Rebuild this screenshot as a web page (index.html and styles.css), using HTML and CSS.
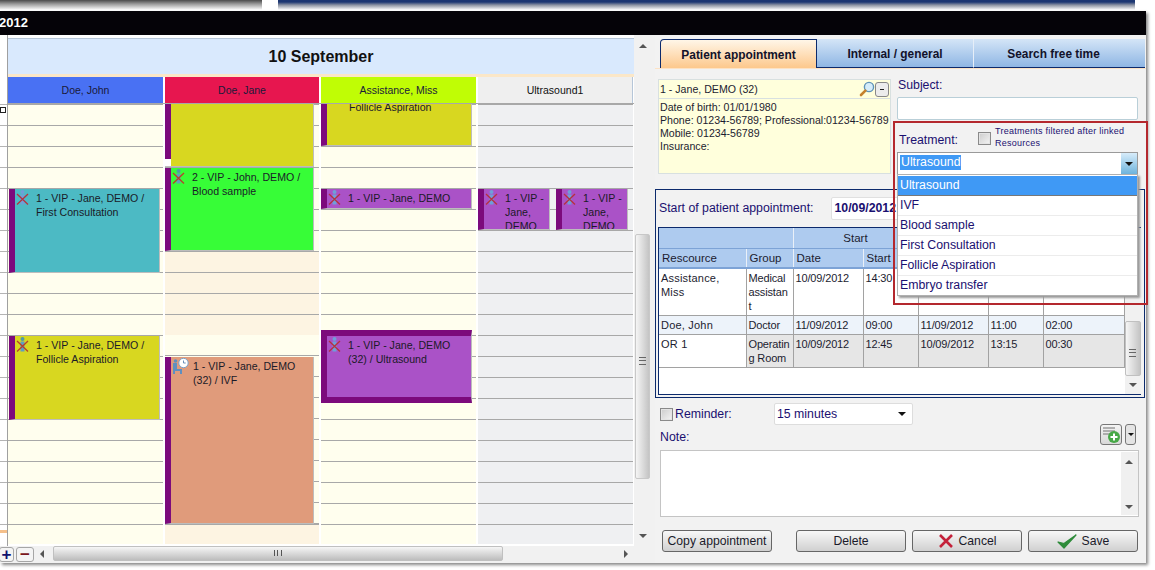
FILE: index.html
```html
<!DOCTYPE html>
<html>
	<head>
		<title>Appointment 2012</title>
		<link rel="stylesheet" href="styles.css">
	</head>
	<body>
		<div class="topstrip"><div class="strip-gray"></div><div class="strip-blue"></div></div>
		<div class="window">
			<div class="titlebar">2012</div>
			<div class="main">
				<div class="left">
					<div class="left-top">
						<div class="gutter">
							<div class="gutter-ticks"></div>
							<div class="gutter-box"></div>
							<div class="gutter-mark"></div>
						</div>
						<div class="calendar">
							<div class="day">10 September</div>
							<div class="heads">
								<div class="head head-john">Doe, John</div>
								<div class="head head-jane">Doe, Jane</div>
								<div class="head head-miss">Assistance, Miss</div>
								<div class="head head-us">Ultrasound1</div>
							</div>
							<div class="grid">
								<div class="col col-john">
									<div class="ev ev-teal" style="top:85px;height:84px"><svg class="ico"><use href="#absent"/></svg><p>1 - VIP - Jane, DEMO /<br>First Consultation</p></div>
									<div class="ev ev-olive" style="top:232px;height:84px"><svg class="ico"><use href="#absent2"/></svg><p>1 - VIP - Jane, DEMO /<br>Follicle Aspiration</p></div>
								</div>
								<div class="col col-jane">
									<div class="ev ev-olive ev-short" style="top:-26px;height:89px"></div>
									<div class="ev ev-green" style="top:64px;height:83px"><svg class="ico"><use href="#absent2"/></svg><p>2 - VIP - John, DEMO /<br>Blood sample</p></div>
									<div class="ev ev-salmon" style="top:253px;height:167px"><svg class="ico ico-wait"><use href="#waiting"/></svg><p>1 - VIP - Jane, DEMO<br>(32) / IVF</p></div>
								</div>
								<div class="col col-miss">
									<div class="ev ev-olive ev-clip" style="top:-21px;height:63px"><p>Follicle Aspiration</p></div>
									<div class="ev ev-purple" style="top:85px;height:20px"><svg class="ico"><use href="#absent"/></svg><p>1 - VIP - Jane, DEMO</p></div>
									<div class="ev ev-purple ev-band" style="top:226px;height:73px"><svg class="ico"><use href="#absent"/></svg><p>1 - VIP - Jane, DEMO<br>(32) / Ultrasound</p></div>
								</div>
								<div class="col col-us">
									<div class="ev ev-purple ev-half" style="top:85px;height:41px"><svg class="ico"><use href="#absent"/></svg><p>1 - VIP -<br>Jane,<br>DEMO</p></div>
									<div class="ev ev-purple ev-half ev-half2" style="top:85px;height:41px"><svg class="ico"><use href="#absent"/></svg><p>1 - VIP -<br>Jane,<br>DEMO</p></div>
								</div>
							</div>
						</div>
						<div class="vscroll">
							<span class="arrow-up"></span>
							<div class="vthumb"><span class="grip"></span></div>
							<span class="arrow-down"></span>
						</div>
					</div>
					<div class="hbar">
						<button class="zoom-btn zoom-plus">+</button>
						<button class="zoom-btn zoom-minus">&minus;</button>
						<span class="arrow-left"></span>
						<div class="hthumb"><span class="hgrip"></span></div>
						<span class="arrow-right"></span>
					</div>
				</div>

				<div class="right">
					<div class="tabs">
						<div class="tab tab-on">Patient appointment</div>
						<div class="tab tab-mid">Internal / general</div>
						<div class="tab tab-last">Search free time</div>
					</div>
					<div class="tab-line"></div>

					<div class="upper">
						<div class="patient">
							<div class="patient-name">
								<span>1 - Jane, DEMO (32)</span>
								<svg class="lens" viewBox="0 0 16 16"><circle cx="10" cy="6" r="4.6" fill="#d5ecfa" stroke="#5f93b8" stroke-width="1.4"/><path d="M6.4 9.6 2 14" stroke="#c5822e" stroke-width="2.6" stroke-linecap="round"/></svg>
								<span class="collapse"></span>
							</div>
							<div class="patient-info">Date of birth: 01/01/1980<br>Phone: 01234-56789; Professional:01234-56789<br>Mobile: 01234-56789<br>Insurance:</div>
						</div>
						<div class="subject">
							<label class="lbl">Subject:</label>
							<div class="subject-input"></div>
							<div class="treat-row">
								<label class="lbl">Treatment:</label>
								<span class="check"></span>
								<span class="filter-note">Treatments filtered after linked Resources</span>
							</div>
							<div class="combo">
								<span class="combo-sel">Ultrasound</span>
								<span class="combo-btn"><i class="caret"></i></span>
							</div>
						</div>
					</div>

					<div class="start-box">
						<div class="start-row">
							<span>Start of patient appointment:</span>
							<span class="date-input">10/09/2012</span>
						</div>
						<div class="table-wrap">
							<table>
								<colgroup>
									<col class="c1"><col class="c2"><col class="c3"><col class="c4"><col class="c5"><col class="c6"><col class="c7">
								</colgroup>
								<tr class="th-top"><th colspan="2"></th><th colspan="2">Start</th><th colspan="3"></th></tr>
								<tr class="th-sub"><th>Rescource</th><th>Group</th><th>Date</th><th>Start</th><th></th><th></th><th></th></tr>
								<tr class="r-white"><td>Assistance, Miss</td><td>Medical<br>assistan<br>t</td><td>10/09/2012</td><td>14:30</td><td></td><td></td><td></td></tr>
								<tr class="r-blue"><td>Doe, John</td><td>Doctor</td><td>11/09/2012</td><td>09:00</td><td>11/09/2012</td><td>11:00</td><td>02:00</td></tr>
								<tr class="r-gray"><td>OR 1</td><td>Operatin<br>g Room</td><td>10/09/2012</td><td>12:45</td><td>10/09/2012</td><td>13:15</td><td>00:30</td></tr>
							</table>
							<div class="tscroll">
								<div class="tthumb"><span class="grip"></span></div>
								<span class="arrow-down"></span>
							</div>
						</div>
					</div>

					<div class="reminder">
						<span class="check"></span>
						<label class="lbl">Reminder:</label>
						<div class="minutes">15 minutes<i class="caret"></i></div>
					</div>
					<div class="note-row">
						<label class="lbl">Note:</label>
						<div class="note-tools">
							<span class="add-btn">
								<svg viewBox="0 0 20 19" width="20" height="19"><path d="M2 3h12M2 6h12M2 9h7" stroke="#9a9a9a" stroke-width="1.5"/><circle cx="13" cy="12" r="6" fill="#47a847"/><path d="M13 8.5v7M9.5 12h7" stroke="#fff" stroke-width="2"/></svg>
							</span>
							<span class="add-more"><i class="caret"></i></span>
						</div>
					</div>
					<div class="note">
						<div class="note-scroll"><span class="arrow-up"></span><span class="arrow-down"></span></div>
					</div>

					<div class="buttons">
						<button class="btn btn-copy">Copy appointment</button>
						<button class="btn btn-act">Delete</button>
						<button class="btn btn-act">
							<svg viewBox="0 0 16 14" width="16" height="14"><path d="M2 1 14 13M14 1 2 13" stroke="#c4213a" stroke-width="2.6"/></svg>Cancel
						</button>
						<button class="btn btn-act">
							<svg viewBox="0 0 20 15" width="20" height="15"><path d="M1 8 7 14 19 1 7 9.5Z" fill="#2e8b3a" stroke="#2e8b3a" stroke-width="1.2" stroke-linejoin="round"/></svg>Save
						</button>
					</div>

					<div class="picker">
						<div class="pick pick-on">Ultrasound</div>
						<div class="pick">IVF</div>
						<div class="pick">Blood sample</div>
						<div class="pick">First Consultation</div>
						<div class="pick">Follicle Aspiration</div>
						<div class="pick">Embryo transfer</div>
					</div>
					<div class="redbox"></div>
				</div>
			</div>
		</div>

		<svg class="defs" width="0" height="0">
			<symbol id="absent" viewBox="0 0 13 15">
				<circle cx="6.5" cy="2" r="2" fill="#6f9fd8"/>
				<path d="M4.5 4.5h4v10h-4z" fill="#6f9fd8"/>
				<path d="M1 4 12 14.5M12 4 1 14.5" stroke="#b5323e" stroke-width="1.3"/>
			</symbol>
			<symbol id="absent2" viewBox="0 0 13 15">
				<circle cx="6.5" cy="2" r="2" fill="#4f9aa8"/>
				<path d="M4.5 4.5h4v10h-4z" fill="#5f9fc0"/>
				<path d="M1 4 12 14.5M12 4 1 14.5" stroke="#b8402a" stroke-width="1.3"/>
			</symbol>
			<symbol id="waiting" viewBox="0 0 17 17">
				<circle cx="11.5" cy="5" r="4.7" fill="#fff" stroke="#7aa0c8"/>
				<path d="M11.5 2.5V5h2.2" fill="none" stroke="#6a8fb8"/>
				<circle cx="3.5" cy="3" r="1.8" fill="#5f8fc0"/>
				<path d="M1 5h4v6h5v5H8v-3H3v3H1z" fill="#5f8fc0"/>
			</symbol>
		</svg>
	</body>
</html>
```

FILE: styles.css
```css
html, body { margin: 0; padding: 0; }
body {
	width: 1155px;
	height: 570px;
	overflow: hidden;
	background: #fff;
	font-family: "Liberation Sans", Arial, sans-serif;
	font-size: 12px;
	color: #1c1c30;
}
p { margin: 0; }
label { display: block; }
button { font-family: inherit; padding: 0; }
.defs { display: block; height: 0; }

.topstrip { display: flex; height: 11px; }
.strip-gray { width: 262px; height: 10px; background: linear-gradient(#4a4a4a, #9a9a9a 40%, #fff); }
.strip-blue { width: 857px; height: 10px; margin-left: 16px; background: linear-gradient(#1c3672 20%, #8b92a2 50%, #fff); }

.window {
	width: 1146px;
	height: 552px;
	background: #f2f2f2;
	box-shadow: 2px 2px 3px #888;
}
.titlebar {
	height: 24px;
	background: #050308;
	color: #fff;
	font-size: 13px;
	font-weight: bold;
	line-height: 24px;
	text-indent: -1px;
}
.main { display: flex; position: relative; height: 528px; }

/* left side: calendar */
.left { width: 655px; background: #fff; }
.left-top { display: flex; height: 511px; }
.gutter { width: 7px; position: relative; border-right: 1px solid #a0a0a0; }
.gutter-ticks {
	position: absolute;
	left: 0;
	right: 0;
	top: 69px;
	height: 440px;
	background: linear-gradient(#fff 20px, #b4b4b4 20px) 0 1px / 100% 21px;
}
.gutter-box { position: absolute; left: 0; top: 72px; width: 4px; height: 4px; border: 1px solid #222; background: #fff; }
.gutter-mark { position: absolute; left: 0; top: 495px; width: 7px; height: 3px; background: #f5c08a; }

.calendar { width: 626px; display: flex; flex-direction: column; padding-top: 3px; }
.day {
	height: 35px;
	background: #d9e9fd;
	border-top: 1px solid #b6c6d8;
	border-bottom: 3px solid #fbe7c8;
	font-size: 16px;
	font-weight: bold;
	line-height: 35px;
	text-align: center;
	color: #111;
}
.heads { display: flex; height: 26px; border-bottom: 1px solid #a8a8a8; font-size: 10.5px; }
.head { width: 155px; margin-right: 2px; line-height: 26px; text-align: center; color: #1a1a3a; }
.head-john { background: #4971f3; }
.head-jane { background: #e7164f; width: 154px; }
.head-miss { background: #c0fd05; }
.head-us { background: #efefef; border-right: 1px solid #b6c6d8; width: 154px; margin-right: 0; color: #111; }

.grid { display: flex; height: 440px; overflow: hidden; font-size: 10.6px; }
.col {
	position: relative;
	width: 155px;
	margin-right: 2px;
	background: linear-gradient(#fffeee 20px, #a8a8a8 20px) 0 1px / 100% 21px;
	overflow: hidden;
}
.col-jane { width: 154px; background: linear-gradient(#fdf4e2 20px, #a8a8a8 20px) 0 1px / 100% 21px; }
.col-us { margin-right: 0; background: linear-gradient(#eff0f2 20px, #a8a8a8 20px) 0 1px / 100% 21px; }
.col-jane::before, .col-jane::after {
	content: "";
	position: absolute;
	left: 0;
	right: 0;
	background: linear-gradient(#fffeee 20px, #a8a8a8 20px) 0 1px / 100% 21px;
}
.col-jane::before { top: 0; height: 147px; }
.col-jane::after { top: 231px; height: 189px; background-position: 0 0; }

.ev {
	position: absolute;
	z-index: 1;
	left: 1px;
	right: 3px;
	box-sizing: border-box;
	display: flex;
	border-left: 6px solid #7c0a7c;
	border-right: 1px solid #bdbdbd;
	border-bottom: 1px solid #bdbdbd;
	overflow: hidden;
	color: #1a1a28;
}
.col-jane .ev { left: 0; right: 5px; }
.col-miss .ev { left: 0; right: 4px; }
.ev p { line-height: 14px; padding-top: 2px; white-space: nowrap; }
.ico { width: 13px; height: 15px; flex: none; margin: 1px 7px 0 1px; }
.ico-wait { width: 17px; height: 17px; margin: 1px 4px 0 1px; }
.ev-teal { background: #4cbac4; }
.ev-olive { background: #d8d720; }
.ev-green { background: #37fd37; }
.ev-salmon { background: #e09b7b; }
.ev-purple { background: #aa52c7; }
.ev-band { border-top: 6px solid #7c0a7c; border-bottom: 6px solid #7c0a7c; }
.ev-clip p { padding: 17px 0 0 22px; }
.ev-short {
	border-left: 0;
	background:
		linear-gradient(#7c0a7c, #7c0a7c) 0 0 / 6px 81px no-repeat,
		linear-gradient(#fff, #fff) 0 0 / 6px 100% no-repeat,
		#d8d720;
}
.col-us .ev-half { left: 0; right: auto; width: 72px; }
.col-us .ev-half2 { left: 78px; }

.vscroll { width: 21px; position: relative; background: #f1f1f1; }
.vthumb {
	position: absolute;
	left: 1px;
	top: 199px;
	width: 15px;
	height: 245px;
	box-sizing: border-box;
	background: linear-gradient(90deg, #f5f5f5, #c4c4c4);
	border: 1px solid #c8c8c8;
	border-radius: 2px;
}
.grip { position: absolute; left: 3px; top: 50%; width: 7px; height: 6px; border-top: 1px solid #666; border-bottom: 1px solid #666; }
.grip::after { content: ""; position: absolute; left: 0; right: 0; top: 2px; border-top: 1px solid #666; }
.arrow-up, .arrow-down, .arrow-left, .arrow-right { position: absolute; width: 0; height: 0; border-style: solid; border-color: transparent; }
.arrow-up { left: 5px; top: 9px; border-width: 0 4px 4px; border-bottom-color: #555; }
.arrow-down { left: 5px; top: 499px; border-width: 4px 4px 0; border-top-color: #555; }

.hbar { display: flex; align-items: center; position: relative; height: 17px; background: #f1f1f1; }
.zoom-btn {
	width: 15px;
	height: 15px;
	background: #f4f4f4;
	border: 1px solid #a6a6a6;
	border-radius: 3px;
	font-size: 17px;
	font-weight: bold;
	line-height: 11px;
	color: #11116e;
}
.zoom-plus { margin-left: -1px; }
.zoom-minus { margin-left: 2px; width: 18px; color: #7a1620; }
.arrow-left { left: 40px; top: 4px; border-width: 4px 4px 4px 0; border-right-color: #555; }
.arrow-right { left: 624px; top: 4px; border-width: 4px 0 4px 4px; border-left-color: #555; }
.hthumb {
	position: absolute;
	left: 53px;
	top: 0;
	width: 450px;
	height: 15px;
	box-sizing: border-box;
	background: linear-gradient(#f6f6f6, #bdbdbd);
	border: 1px solid #c0c0c0;
	border-radius: 2px;
}
.hgrip { position: absolute; left: 220px; top: 3px; width: 6px; height: 6px; border-left: 1px solid #555; border-right: 1px solid #555; }
.hgrip::after { content: ""; position: absolute; left: 2px; top: 0; height: 6px; border-left: 1px solid #555; }

/* right side: appointment form */
.right { position: relative; width: 491px; color: #1a1070; font-size: 12.3px; }
.tabs { display: flex; height: 29px; margin: 4px 0 0 5px; font-size: 11.9px; }
.tab {
	box-sizing: border-box;
	font-weight: bold;
	line-height: 30px;
	text-align: center;
	color: #12122a;
	background: linear-gradient(#d4e5f7, #8fb6e4);
	border-bottom: 1px solid #0c2a6c;
}
.tab-on { width: 157px; background: linear-gradient(#fff6e8, #fdc88c); border: 1px solid #0c2a6c; border-bottom: 0; border-radius: 4px 0 0 0; }
.tab-mid { width: 157px; border-right: 1px solid #e6eef8; }
.tab-last { width: 171px; padding-right: 12px; }
.tab-line { height: 1px; background: #fde2c4; }

.upper { display: flex; height: 110px; padding-left: 3px; padding-top: 10px; }
.patient { width: 233px; height: 95px; box-sizing: border-box; background: #ffffdc; border: 1px solid #d8e0e0; color: #1c1c30; font-size: 10.6px; }
.patient-name { display: flex; align-items: center; height: 18px; padding-left: 1px; border-bottom: 1px solid #d8e0e0; }
.patient-name span:first-child { flex: 1; }
.lens { flex: none; width: 16px; height: 16px; }
.collapse { flex: none; position: relative; width: 12px; height: 13px; margin-right: 1px; border: 1px solid #888; border-radius: 3px; background: #ececec; }
.collapse::after { content: ""; position: absolute; left: 4px; top: 6px; width: 4px; border-top: 1px solid #222; }
.patient-info { padding: 2px 1px; line-height: 13px; white-space: nowrap; }

.subject { width: 241px; margin-left: 6px; }
.subject .lbl { line-height: 14px; margin-top: -1px; padding-left: 1px; }
.subject-input { height: 23px; margin-top: 5px; box-sizing: border-box; background: #fff; border: 1px solid #b9cfd8; border-radius: 2px; }
.treat-row { display: flex; align-items: center; margin-top: 6px; height: 24px; }
.subject .treat-row .lbl { width: 81px; box-sizing: border-box; padding-left: 2px; margin-top: 3px; flex: none; }
.check { width: 13px; height: 13px; box-sizing: border-box; flex: none; border: 1px solid #8a8a8a; background: linear-gradient(135deg, #ccc, #f4f4f4); box-shadow: inset 0 0 0 1px #e4e4e4; }
.filter-note { font-size: 9px; line-height: 12px; margin: -2px 0 0 4px; width: 142px; letter-spacing: 0.25px; }
.combo { display: flex; height: 23px; margin-top: 2px; box-sizing: border-box; background: #fff; border: 1px solid #9a9a9a; padding-left: 2px; justify-content: space-between; }
.combo-sel { background: #3f99f5; color: #fff; height: 15px; line-height: 15px; margin-top: 2px; padding: 0 1px; }
.combo-btn { width: 16px; background: linear-gradient(#d7ecfa, #6db3dc); display: flex; align-items: center; justify-content: center; }
.caret { display: inline-block; width: 0; height: 0; border-style: solid; border-width: 4px 4px 0; border-color: #111 transparent transparent; }

.start-box {
	position: relative;
	width: 490px;
	height: 209px;
	box-sizing: border-box;
	border: 1px solid #0c2a6c;
	padding: 0 2px;
}
.start-row { display: flex; align-items: center; height: 36px; padding: 0 0 1px 1px; }
.date-input { width: 308px; height: 23px; margin-left: 17px; box-sizing: border-box; padding-left: 3px; font-weight: bold; line-height: 21px; background: #fff; border: 1px solid #e0e0e0; border-radius: 2px; }
.table-wrap { display: flex; height: 168px; box-sizing: border-box; border: 1px solid #0c2a6c; width: 483px; background: #fff; }
table { flex: none; border-collapse: collapse; table-layout: fixed; width: 465px; height: 139px; color: #1c1c30; line-height: 14px; font-size: 11px; letter-spacing: -0.15px; }
.c1 { width: 87px; } .c2 { width: 47px; } .c3 { width: 70px; } .c4 { width: 55px; } .c5 { width: 70px; } .c6 { width: 55px; } .c7 { width: 81px; }
th { background: #aecbef; font-size: 11.5px; letter-spacing: 0; font-weight: normal; padding: 0 3px; text-align: left; color: #1c1c30; border-right: 1px solid #eaf0f8; }
.th-top { height: 20px; }
.th-top th { text-align: center; border-bottom: 1px solid #7da3d6; }
.th-sub { height: 20px; }
.th-sub th { border-bottom: 2px solid #7da3d6; }
td { border: 1px solid #a2a2a2; border-left-width: 0; padding: 2px 2px 0; vertical-align: top; white-space: nowrap; }
td:first-child { letter-spacing: 0.2px; white-space: normal; }
.r-white { height: 47px; background: #fff; }
.r-blue { height: 19px; background: #edf3fa; }
.r-gray { height: 33px; background: #e6e6e6; }
.r-gray td:first-child { background: #fff; }
.tscroll { position: relative; flex: none; width: 16px; background: #f1f1f1; }
.tthumb { position: absolute; left: 0; top: 93px; width: 16px; height: 55px; box-sizing: border-box; background: linear-gradient(90deg, #f5f5f5, #c4c4c4); border: 1px solid #c0c0c0; border-radius: 2px; }
.tscroll .arrow-down { left: 4px; top: 155px; }

.reminder { display: flex; align-items: center; height: 22px; margin: 5px 0 0 5px; }
.reminder .lbl { margin-left: 2px; width: 99px; }
.minutes { display: flex; justify-content: space-between; align-items: center; width: 139px; height: 22px; box-sizing: border-box; padding: 0 6px 0 2px; background: #fff; border: 1px solid #ddd; border-radius: 2px; }
.note-row { display: flex; justify-content: space-between; align-items: flex-end; height: 22px; margin: -2px 10px 0 5px; }
.note-row .lbl { line-height: 16px; }
.note-tools { display: flex; }
.add-btn { width: 22px; height: 21px; box-sizing: border-box; background: linear-gradient(#f4f4f4, #d8d8d8); border: 1px solid #777; border-radius: 3px; }
.add-btn svg { display: block; }
.add-more { width: 11px; height: 21px; margin-left: 3px; box-sizing: border-box; background: #e4e4e4; border: 1px solid #777; border-radius: 3px; display: flex; align-items: center; justify-content: center; }
.add-more .caret { border-width: 3px 3px 0; }
.note { position: relative; height: 67px; margin: 5px 7px 0 5px; box-sizing: border-box; background: #fff; border: 1px solid #c4c4c4; }
.note-scroll { position: absolute; right: 0; top: 1px; bottom: 1px; width: 17px; background: #f0f0f0; }
.note-scroll .arrow-up { left: 4px; top: 8px; }
.note-scroll .arrow-down { left: 4px; top: 53px; }

.buttons { display: flex; margin: 13px 0 0 7px; }
.btn {
	display: flex;
	align-items: center;
	justify-content: center;
	gap: 5px;
	height: 22px;
	box-sizing: border-box;
	background: linear-gradient(#f8f8f8, #d0d0d0);
	border: 1px solid #666;
	border-radius: 3px;
	font-size: 12.2px;
	color: #1a1a2a;
}
.btn-copy { width: 110px; margin-right: 24px; }
.btn-act { width: 110px; margin-right: 6px; }

.picker {
	position: absolute;
	z-index: 2;
	left: 242px;
	top: 139px;
	width: 241px;
	height: 122px;
	box-sizing: border-box;
	background: #fff;
	border: 1px solid #b0b0b0;
	box-shadow: 2px 2px 2px #999;
	padding-top: 1px;
}
.pick { height: 20px; box-sizing: border-box; line-height: 19px; padding-left: 2px; border-bottom: 1px solid #ececec; }
.pick:last-child { border-bottom: 0; }
.pick-on { background: #3f99f5; color: #fff; border-bottom: 1px solid #777; }
.redbox {
	position: absolute;
	z-index: 3;
	left: 238px;
	top: 86px;
	width: 255px;
	height: 184px;
	box-sizing: border-box;
	border: 2px solid #b4282e;
}
```
